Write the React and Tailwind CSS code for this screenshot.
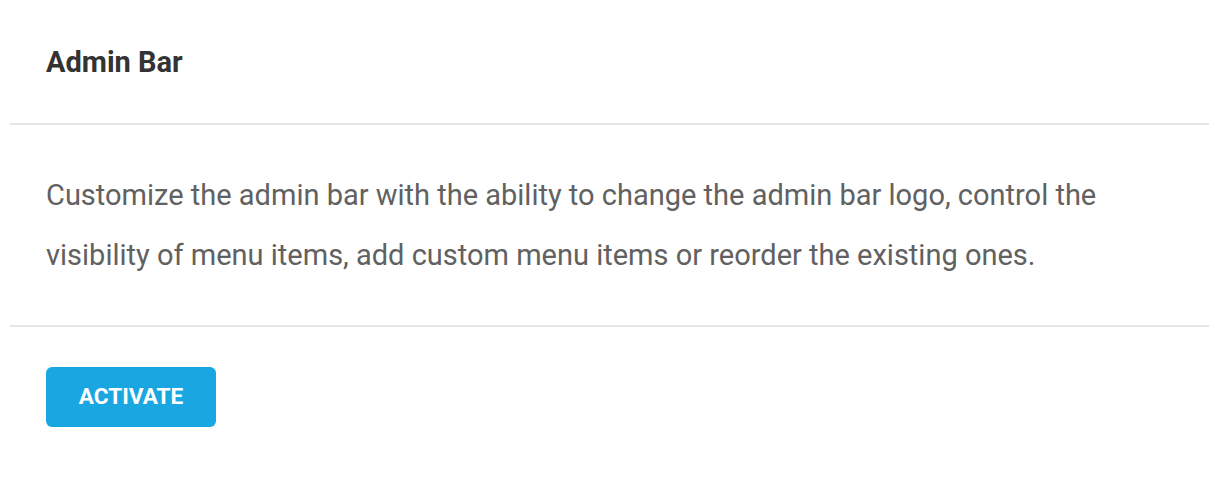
import React from 'react';

export default function App() {
  return (
    <div className="min-h-screen bg-white" style={{ fontFamily: 'Roboto, "Liberation Sans", sans-serif' }}>
      <div className="mx-[10px] w-[1199px]">
        {/* header */}
        <div className="flex h-[125px] items-center px-[36px] border-b-2 border-[#e5e5e5]">
          <h2 className="text-[29px] font-bold text-[#333333] leading-none pt-[2px]">Admin Bar</h2>
        </div>

        {/* description */}
        <div className="px-[36px] pt-[40px] pb-[40px] border-b-2 border-[#e5e5e5]">
          <p className="text-[29px] leading-[60px] text-[#616161]">
            Customize the admin bar with the ability to change the admin bar logo, control the
            visibility of menu items, add custom menu items or reorder the existing ones.
          </p>
        </div>

        {/* actions */}
        <div className="px-[36px] pt-[40px] pb-[40px]">
          <button className="h-[60px] w-[170px] rounded-[6px] bg-[#1aa7e1] text-white text-[22.6px] font-bold uppercase">
            Activate
          </button>
        </div>
      </div>
    </div>
  );
}
